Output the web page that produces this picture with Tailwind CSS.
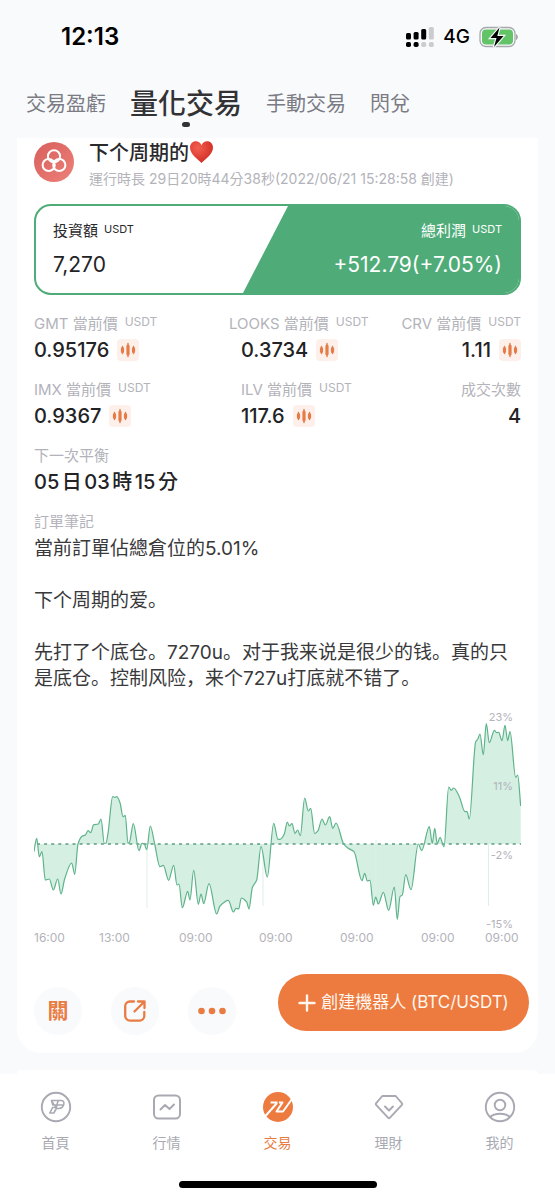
<!DOCTYPE html>
<html lang="zh-Hant">
<head>
<meta charset="utf-8">
<meta name="viewport" content="width=device-width, initial-scale=1">
<title>量化交易</title>
<script src="https://cdn.jsdelivr.net/npm/@tailwindcss/browser@4"></script>
</head>
<body class="flex min-h-screen flex-col bg-[#f8fafc] font-['Inter','Noto_Sans_CJK_TC',sans-serif] text-[#2a2a2c]">
<svg class="hidden" aria-hidden="true">
  <symbol id="candles" viewBox="0 0 22 22">
    <rect width="22" height="22" rx="4" fill="#fdf0eb"/>
    <g stroke="#e57c48" stroke-linecap="round">
      <path d="M5.5 7.500v7M11 4.500v13M16.500 7.500v7" stroke-width="1.400"/>
      <path d="M5.500 9.500v3M11 7v8M16.500 9.500v3" stroke-width="3.200"/>
    </g>
  </symbol>
</svg>

<header>
  <div class="flex h-[74px] items-center justify-between pr-[36px] pl-[61px] text-black">
    <span class="text-[24px] font-semibold">12:13</span>
    <div class="flex items-center gap-[9px]">
      <svg class="h-[20px] w-[28px]" viewBox="0 0 28 20">
        <g fill="#000"><rect y="6" width="5" height="6.500" rx="1.500"/><rect x="7.600" y="5" width="5" height="7.500" rx="1.500"/><rect x="15.200" y="2" width="5" height="10.500" rx="1.500"/><rect y="15" width="5" height="5" rx="1.800"/><rect x="7.600" y="15" width="5" height="5" rx="1.800"/></g>
        <g fill="#cbccce"><rect x="22.800" width="5" height="12.500" rx="1.500"/><rect x="15.200" y="15" width="5" height="5" rx="1.800"/><rect x="22.800" y="15" width="5" height="5" rx="1.800"/></g>
      </svg>
      <span class="text-[19px] font-medium">4G</span>
      <svg class="h-[22px] w-[40px]" viewBox="0 0 40 22">
        <rect x="1" y="1.500" width="35" height="19" rx="6" fill="none" stroke="#a6a8aa" stroke-width="1.300"/>
        <rect x="3" y="3.500" width="31" height="15" rx="4" fill="#62c466"/>
        <path d="M37.500 8.500q2 2.500 0 5z" fill="#a6a8aa" stroke="#a6a8aa"/>
        <path d="M20.500 1.500 11.500 12h6l-2.500 9 9.500-11h-6.200z" fill="#000" stroke="#f8fafc" stroke-width="2.400" paint-order="stroke"/>
      </svg>
    </div>
  </div>
  <nav class="flex h-[64px] items-center gap-[24px] px-[26px] pb-[5px] text-[20px] text-[#7b7b84]">
    <a href="#">交易盈虧</a>
    <a href="#" class="relative text-[28px] font-medium text-[#333335]">量化交易<span class="absolute -bottom-[2px] left-1/2 h-[5px] w-[8px] -translate-x-1/2 rounded-full bg-[#333335]"></span></a>
    <a href="#">手動交易</a>
    <a href="#">閃兌</a>
  </nav>
</header>

<main class="relative px-[17px]">
  <article class="rounded-b-[24px] bg-white px-[17px] pb-[18px]">
    <div class="flex gap-[15px]">
      <svg class="mt-[4px] size-[40px] shrink-0" viewBox="0 0 40 40">
        <defs><linearGradient id="badge" x2="1" y2="1"><stop stop-color="#d65f5c"/><stop offset="1" stop-color="#ee8079"/></linearGradient></defs>
        <circle cx="20" cy="20" r="20" fill="url(#badge)"/>
        <g fill="none" stroke="#fff" stroke-width="2"><circle cx="20" cy="14.300" r="6.100"/><circle cx="14.700" cy="23" r="6.100"/><circle cx="25.300" cy="23" r="6.100"/></g>
      </svg>
      <div>
        <h1 class="flex h-[28px] items-center text-[20px] leading-[28px] font-medium"><span lang="zh-Hans" class="font-['Noto_Sans_CJK_SC',sans-serif]">下个周期的</span>
          <svg class="h-[24px] w-[25px]" viewBox="0 0 25 24" role="img" aria-label="❤">
            <defs><radialGradient id="heart" cx=".35" cy=".3" r=".75"><stop stop-color="#f4604f"/><stop offset="1" stop-color="#cf2a22"/></radialGradient></defs>
            <path d="M12.500 23C9 19.500 1 14.500 1 7.600 1 3.800 3.600 1.300 6.800 1.300c2.600 0 4.700 1.500 5.700 4 1-2.500 3.100-4 5.700-4C21.400 1.300 24 3.800 24 7.600 24 14.500 16 19.500 12.500 23z" fill="url(#heart)"/>
          </svg>
        </h1>
        <p class="text-[14px] leading-[26px] whitespace-nowrap text-[#b3b3ba]">運行時長 29日20時44分38秒(2022/06/21 15:28:58 創建)</p>
      </div>
    </div>

    <section class="mt-[12px] flex h-[91px] overflow-hidden rounded-[17px] border-2 border-[#4fac78]">
      <div class="flex-1 pt-[13px] pl-[17px]">
        <p class="flex gap-[6px] text-[15px] leading-[24px]">投資額<span class="text-[11px] leading-[20px]">USDT</span></p>
        <p class="mt-[7px] text-[21px] leading-[30px] text-[#232325]">7,270</p>
      </div>
      <div class="w-[276px] bg-[#4fac78] pt-[13px] pr-[17px] text-white [clip-path:polygon(45px_0,100%_0,100%_100%,0_100%)]">
        <p class="flex justify-end gap-[6px] text-[15px] leading-[24px]">總利潤<span class="text-[11px] leading-[20px]">USDT</span></p>
        <p class="mt-[7px] text-right text-[21px] leading-[30px]">+512.79(+7.05%)</p>
      </div>
    </section>

    <dl class="mt-[18px] grid grid-cols-[207fr_153fr_127fr] gap-y-[14px] text-[15px] whitespace-nowrap text-[#b3b3ba]">
      <div>
        <dt class="flex gap-[7px] leading-[22px]">GMT 當前價<span class="text-[12px] leading-[18px]">USDT</span></dt>
        <dd class="flex items-center gap-[8px] text-[20px] leading-[30px] font-medium text-[#232325]">0.95176<svg class="size-[22px]"><use href="#candles"/></svg></dd>
      </div>
      <div>
        <dt class="-ml-[12px] flex gap-[7px] leading-[22px]">LOOKS 當前價<span class="text-[12px] leading-[18px]">USDT</span></dt>
        <dd class="flex items-center gap-[8px] text-[20px] leading-[30px] font-medium text-[#232325]">0.3734<svg class="size-[22px]"><use href="#candles"/></svg></dd>
      </div>
      <div>
        <dt class="flex justify-end gap-[7px] leading-[22px]">CRV 當前價<span class="text-[12px] leading-[18px]">USDT</span></dt>
        <dd class="flex items-center justify-end gap-[8px] text-[20px] leading-[30px] font-medium text-[#232325]">1.11<svg class="size-[22px]"><use href="#candles"/></svg></dd>
      </div>
      <div>
        <dt class="flex gap-[7px] leading-[22px]">IMX 當前價<span class="text-[12px] leading-[18px]">USDT</span></dt>
        <dd class="flex items-center gap-[8px] text-[20px] leading-[30px] font-medium text-[#232325]">0.9367<svg class="size-[22px]"><use href="#candles"/></svg></dd>
      </div>
      <div>
        <dt class="flex gap-[7px] leading-[22px]">ILV 當前價<span class="text-[12px] leading-[18px]">USDT</span></dt>
        <dd class="flex items-center gap-[8px] text-[20px] leading-[30px] font-medium text-[#232325]">117.6<svg class="size-[22px]"><use href="#candles"/></svg></dd>
      </div>
      <div class="text-right">
        <dt class="leading-[22px]">成交次數</dt>
        <dd class="text-[20px] leading-[30px] font-medium text-[#232325]">4</dd>
      </div>
      <div class="col-span-3">
        <dt class="leading-[22px]">下一次平衡</dt>
        <dd class="text-[20px] leading-[30px] font-medium text-[#232325] [text-autospace:normal]">05日03時15分</dd>
      </div>
      <div class="col-span-3">
        <dt class="leading-[22px]">訂單筆記</dt>
        <dd class="mt-[3px] text-[19px] leading-[26px] whitespace-normal text-[#39393b]">
          <p>當前訂單佔總倉位的5.01%</p>
          <div lang="zh-Hans" class="font-['Inter','Noto_Sans_CJK_SC',sans-serif]">
            <p class="mt-[26px]">下个周期的爱。</p>
            <p class="mt-[26px]">先打了个底仓。7270u。对于我来说是很少的钱。真的只是底仓。控制风险，来个727u打底就不错了。</p>
          </div>
        </dd>
      </div>
    </dl>

    <svg class="mt-[8px] w-full" viewBox="34 700 487 250" role="img" aria-label="收益率">
      <path id="area" fill="#d5efe3"/>
      <path d="M147 848v60M263 848v58M376 840v56M488.500 840v66" stroke="#dfeee8" fill="none"/>
      <path d="M37 844H521" stroke="#5d9c80" stroke-width="1.500" stroke-dasharray="3 4.100" fill="none"/>
      <path id="line" fill="none" stroke="#5fb38b" stroke-width="1.200" stroke-linejoin="round"/>
      <g fill="#b3b3ba" font-size="11" text-anchor="end">
        <text x="513" y="721">23%</text><text x="513" y="790">11%</text><text x="513" y="859">-2%</text><text x="513" y="928">-15%</text>
      </g>
      <g fill="#b3b3ba" font-size="12">
        <text x="34" y="942">16:00</text><text x="99" y="942">13:00</text><text x="179" y="942">09:00</text><text x="259" y="942">09:00</text><text x="340" y="942">09:00</text><text x="421" y="942">09:00</text><text x="485" y="942">09:00</text>
      </g>
    </svg>

    <div class="mt-[37px] flex gap-[29px] text-[#e97c43]">
      <button class="size-[48px] rounded-full bg-[#f8fafc] text-[21px] font-bold">關</button>
      <button class="flex size-[48px] items-center justify-center rounded-full bg-[#f8fafc]" aria-label="分享">
        <svg class="size-[24px]" viewBox="0 0 24 24" fill="none" stroke="currentColor" stroke-width="2.300" stroke-linecap="round" stroke-linejoin="round"><path d="M11 2.500H7A4.800 4.800 0 0 0 2.200 7.300v9.500A4.800 4.800 0 0 0 7 21.600h9.500a4.800 4.800 0 0 0 4.800-4.800V13M11.500 12.500 21 3M15 2.500h6.500V9"/></svg>
      </button>
      <button class="flex size-[48px] items-center justify-center rounded-full bg-[#f8fafc]" aria-label="更多">
        <svg class="h-[8px] w-[30px]" viewBox="0 0 30 8" fill="currentColor"><circle cx="4.500" cy="4" r="3.300"/><circle cx="15" cy="4" r="3.300"/><circle cx="25.500" cy="4" r="3.300"/></svg>
      </button>
    </div>
  </article>
  <button class="absolute right-[26px] bottom-[22px] flex h-[57px] w-[251px] items-center justify-center gap-[5px] rounded-full bg-[#ed7a3f] text-[17px] whitespace-nowrap text-[#fff6ee]">
    <svg class="size-[18px]" viewBox="0 0 18 18" stroke="currentColor" stroke-width="2.400" stroke-linecap="round"><path d="M9 1.500v15M1.500 9h15"/></svg>
    創建機器人 (BTC/USDT)
  </button>
</main>

<div class="mx-[17px] mt-[17px] h-[4px] rounded-t-[24px] bg-white"></div>
<footer class="flex-1 bg-white">
  <nav class="grid grid-cols-5 pt-[17px] text-center text-[14px] leading-[20px] text-[#a9a9b3]">
    <a href="#" class="flex flex-col items-center gap-[10px]">
      <svg class="size-[32px]" viewBox="0 0 32 32" fill="none" stroke="currentColor" stroke-width="1.600" stroke-linejoin="round"><circle cx="16" cy="16" r="14.200" stroke-width="1.900"/><path d="M11.500 9.500h9.500q3.500 0 2.800 3.500-.8 4.500-5 4.500h-2.500l-2.500 4.500h-4l2.800-5.500h2.200l1-2.500h-3zM11.500 9.500l2.500 4.500h9M18 10l-2 7.500M12.600 16.500h3.900"/></svg>首頁</a>
    <a href="#" class="flex flex-col items-center gap-[10px]">
      <svg class="size-[32px]" viewBox="0 0 32 32" fill="none" stroke="currentColor" stroke-width="2" stroke-linejoin="round" stroke-linecap="round"><rect x="3" y="4.500" width="26" height="23" rx="4.500"/><path d="m9.500 18.500 4.500-4.500 4.500 4 4.500-4.500"/></svg>行情</a>
    <a href="#" aria-current="page" class="flex flex-col items-center gap-[10px] text-[#e97c43]">
      <svg class="size-[32px]" viewBox="0 0 32 32" fill="none" stroke="#fff" stroke-width="2"><circle cx="16" cy="16" r="15" fill="#ed7a3f" stroke="none"/><path d="M3 25.500 15 12M8.500 11.500H15.500M17 11.500H20.500L14.500 20.500H21L30 8" stroke-linejoin="round"/></svg>交易</a>
    <a href="#" class="flex flex-col items-center gap-[10px]">
      <svg class="size-[32px]" viewBox="0 0 32 32" fill="none" stroke="currentColor" stroke-width="1.900" stroke-linejoin="round" stroke-linecap="round"><path d="M9.300 5h13.400l6.300 7.300q.6.900-.1 1.600L17 26.700q-1 1-2 0L3.100 13.900q-.7-.7-.1-1.600z"/><path d="m12 15.500 4 4 4-4"/></svg>理財</a>
    <a href="#" class="flex flex-col items-center gap-[10px]">
      <svg class="size-[32px]" viewBox="0 0 32 32" fill="none" stroke="currentColor" stroke-width="1.900"><circle cx="16" cy="16" r="14.200"/><circle cx="16" cy="14" r="5.300"/><path d="M6 26q3.500-3.300 10-3.300T26 26"/></svg>我的</a>
  </nav>
  <div class="mx-auto mt-[28px] h-[7px] w-[198px] rounded-full bg-black"></div>
</footer>

<script>
// Return curve: x, y pairs in the chart's own units; the zero line is at y = 844.
const pts = [];
function add(ox, list) { for (const [x, y] of list) pts.push([ox + x / 3, 700 + y / 3]); }
add(20, [[42,455],[50,415],[58,470],[66,455],[76,540],[88,537],[100,570],[113,537],[123,582],[134,537],[155,489],[164,523],[174,432],[186,409],[196,405],[204,392],[212,398],[221,374],[235,372],[243,357],[253,430],[258,429],[264,400],[278,290],[285,292],[290,290],[300,308],[309,350],[316,346],[324,430],[328,428],[340,371],[357,452],[366,430],[373,432],[380,449],[391,378],[404,432],[420,500],[430,496],[446,541],[461,496],[471,555],[477,552],[487,623],[503,574],[510,600]]);
add(190, [[11,511],[25,613],[33,582],[41,611],[57,551],[80,642],[90,618],[115,601],[130,636],[138,625],[146,627],[154,594],[170,606],[177,627],[187,563],[200,540],[213,440],[232,531],[251,370],[264,418],[270,418],[283,402],[292,366],[298,378],[306,371],[315,400],[323,390],[331,407],[344,294],[355,333],[362,325],[374,401],[384,392],[396,357],[406,375],[419,350],[428,385],[438,369],[461,432],[475,445],[492,455]]);
add(360, [[6,542],[14,520],[22,543],[30,541],[40,616],[47,591],[55,612],[70,577],[86,631],[103,561],[112,658],[120,590],[127,585],[137,524],[153,569],[175,432],[185,452],[208,380],[217,430],[224,385],[232,431],[240,412],[252,440],[266,261],[274,271],[281,264],[298,290],[315,335],[321,335],[328,357],[347,125],[353,118],[360,102],[370,164],[379,71],[388,128],[403,91],[410,98],[416,97],[426,122],[435,76],[443,122],[450,95],[467,232],[473,225],[482,318]]);
// Monotone cubic interpolation.
const n = pts.length, s = [], m = [];
for (let i = 0; i < n - 1; i++) s.push((pts[i+1][1] - pts[i][1]) / (pts[i+1][0] - pts[i][0]));
for (let i = 0; i < n; i++) {
  if (i === 0) m.push(s[0]);
  else if (i === n - 1) m.push(s[n-2]);
  else m.push(s[i-1] * s[i] <= 0 ? 0 : 2 * s[i-1] * s[i] / (s[i-1] + s[i]));
}
let d = `M${pts[0][0].toFixed(1)} ${pts[0][1].toFixed(1)}`;
for (let i = 0; i < n - 1; i++) {
  const [x0, y0] = pts[i], [x1, y1] = pts[i+1], h = (x1 - x0) / 3;
  d += `C${[x0 + h, y0 + m[i] * h, x1 - h, y1 - m[i+1] * h, x1, y1].map(v => v.toFixed(1)).join(' ')}`;
}
document.getElementById('line').setAttribute('d', d);
document.getElementById('area').setAttribute('d', d + 'V844H34Z');
</script>
</body>
</html>
